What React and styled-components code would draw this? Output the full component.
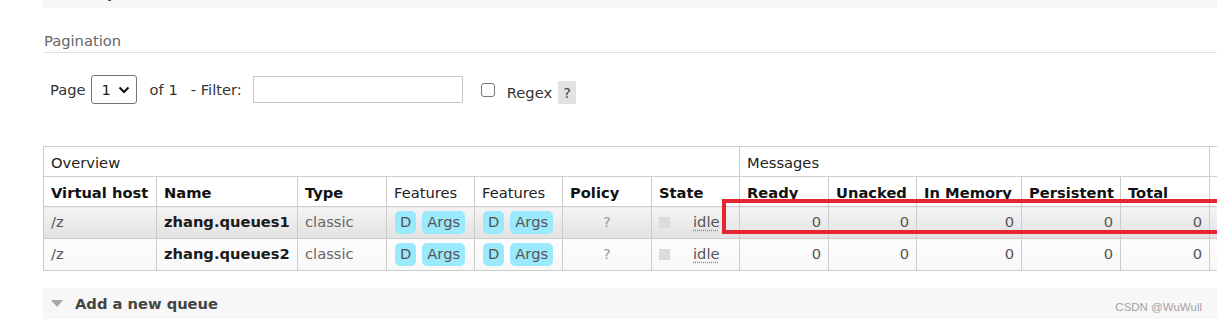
import React from "react";
import styled, { createGlobalStyle } from "styled-components";

const Global = createGlobalStyle`
  html, body { margin: 0; padding: 0; background: #fff; overflow: hidden; }
  body {
    font-family: "DejaVu Sans", Verdana, sans-serif;
    font-size: 14.7px;
    color: #444;
  }
  * { box-sizing: border-box; }
`;

const Page = styled.div`
  position: relative;
  padding-left: 43px;
  height: 321px;
  overflow: hidden;
`;

const SectionBar = styled.div`
  position: relative;
  display: flex;
  align-items: center;
  height: 31px;
  margin-top: ${(p) => p.$offset || 0}px;
  padding-left: 8px;
  background: #f7f7f7;
`;

const Toggle = styled.span`
  width: 0;
  height: 0;
  border-left: 6px solid transparent;
  border-right: 6px solid transparent;
  border-top: 7px solid #a6a6a6;
  margin-right: 12px;
`;

const SectionTitle = styled.h2`
  margin: 0;
  font-size: 14.7px;
  font-weight: bold;
  line-height: 18px;
  color: #444;
`;

const Watermark = styled.span`
  position: absolute;
  right: 15px;
  top: 13px;
  font-family: "Liberation Sans", Arial, sans-serif;
  font-size: 11.5px;
  color: #a3a3a3;
`;

const Legend = styled.h3`
  margin: 24px 0 0;
  padding: 0 0 2px 1px;
  font-size: 14.7px;
  font-weight: normal;
  line-height: 18px;
  color: #666;
  border-bottom: 1px solid #e0e0e0;
`;

const Controls = styled.div`
  display: flex;
  align-items: center;
  height: 29px;
  margin-top: 22px;
  padding-left: 7px;
  color: #333;
`;

const Label = styled.span`
  margin-left: ${(p) => p.$gap || 0}px;
  margin-top: ${(p) => (p.$low ? 6 : 0)}px;
  white-space: nowrap;
`;

const SelectWrap = styled.div`
  position: relative;
  margin-left: 5px;
  width: 46px;
  height: 29px;
`;

const Select = styled.select`
  appearance: none;
  width: 100%;
  height: 100%;
  padding: 0 0 0 10px;
  border: 1px solid #767676;
  border-radius: 3px;
  background: #fff;
  font-family: inherit;
  font-size: 14.7px;
  color: #222;
`;

const Chevron = styled.svg`
  position: absolute;
  right: 7px;
  top: 11px;
  pointer-events: none;
`;

const FilterInput = styled.input`
  margin-left: 11px;
  width: 210px;
  height: 27px;
  border: 1px solid #c6c6c6;
  border-radius: 1px;
  background: #fff;
`;

const Check = styled.input`
  appearance: none;
  margin: 0 0 0 18px;
  width: 14px;
  height: 14px;
  border: 1px solid #767676;
  border-radius: 3px;
  background: #fff;
`;

const Help = styled.span`
  display: inline-flex;
  align-items: center;
  justify-content: center;
  margin: 6px 0 0 6px;
  width: 18px;
  height: 23px;
  background: #e2e2e2;
  color: #444;
`;

const TableClip = styled.div`
  margin-top: 42px;
  overflow: hidden;
`;

const Table = styled.table`
  border-collapse: collapse;
  table-layout: fixed;
  width: 1266px;
`;

const HeadRow = styled.tr`
  height: 30px;
`;

const Th = styled.th`
  border: 1px solid #cccccc;
  padding: 0 6px 4px 7px;
  text-align: left;
  vertical-align: bottom;
  line-height: 18px;
  white-space: nowrap;
  overflow: hidden;
  font-weight: ${(p) => (p.$plain ? "normal" : "bold")};
  color: ${(p) => (p.$plain ? "#222" : "#111")};
  background: #fff;
`;

const DataRow = styled.tr`
  height: 32px;
  & > td {
    background: ${(p) =>
      p.$shade
        ? "linear-gradient(#f4f4f4, #e2e2e2)"
        : "linear-gradient(#fdfdfd, #f7f7f7)"};
  }
`;

const Td = styled.td`
  border: 1px solid #cccccc;
  padding: 0 7px 1px 7px;
  line-height: 18px;
  vertical-align: middle;
  white-space: nowrap;
  overflow: hidden;
  text-align: ${(p) => p.$align || "left"};
  font-weight: ${(p) => (p.$bold ? "bold" : "normal")};
  color: ${(p) => p.$color || "#555"};
`;

const Badge = styled.abbr`
  display: inline-flex;
  align-items: center;
  height: 23px;
  padding: 0 5px;
  margin: 0 5px 0 1px;
  border-radius: 5px;
  background: #9be9fd;
  color: #555;
  text-decoration: none;
  vertical-align: middle;
`;

const StatusKey = styled.span`
  display: inline-block;
  width: 11px;
  height: 11px;
  margin-right: 23px;
  background: #dcdcdc;
  vertical-align: -1px;
`;

const StateText = styled.abbr`
  color: #555;
  text-decoration: underline dotted #888;
  text-underline-offset: 3px;
`;

const Highlight = styled.div`
  position: absolute;
  left: 722px;
  top: 199px;
  width: 520px;
  height: 35px;
  border: 4px solid #e52530;
  pointer-events: none;
`;

const widths = [113, 141, 89, 88, 88, 89, 88, 89, 88, 105, 99, 89, 100];

const queues = [
  { vhost: "/z", name: "zhang.queues1" },
  { vhost: "/z", name: "zhang.queues2" },
];

function Features() {
  return (
    <>
      <Badge title="durable">D</Badge>
      <Badge title="arguments">Args</Badge>
    </>
  );
}

export default function App() {
  return (
    <>
      <Global />
      <Page>
        <SectionBar $offset={-23}>
          <Toggle />
          <SectionTitle>All queues (2)</SectionTitle>
        </SectionBar>

        <Legend>Pagination</Legend>
        <Controls>
          <Label>Page</Label>
          <SelectWrap>
            <Select defaultValue="1">
              <option value="1">1</option>
            </Select>
            <Chevron width="12" height="8" viewBox="0 0 12 8">
              <path d="M1.5 1.5 L6 6 L10.5 1.5" fill="none" stroke="#111" strokeWidth="2" />
            </Chevron>
          </SelectWrap>
          <Label $gap={13}>of 1</Label>
          <Label $gap={13}>- Filter:</Label>
          <FilterInput type="text" />
          <Check type="checkbox" />
          <Label $gap={12} $low>Regex</Label>
          <Help>?</Help>
        </Controls>

        <TableClip>
          <Table>
            <colgroup>
              {widths.map((w, i) => (
                <col key={i} style={{ width: w }} />
              ))}
            </colgroup>
            <thead>
              <HeadRow>
                <Th $plain colSpan={7}>Overview</Th>
                <Th $plain colSpan={5}>Messages</Th>
                <Th $plain></Th>
              </HeadRow>
              <HeadRow>
                <Th>Virtual host</Th>
                <Th>Name</Th>
                <Th>Type</Th>
                <Th $plain>Features</Th>
                <Th $plain>Features</Th>
                <Th>Policy</Th>
                <Th>State</Th>
                <Th>Ready</Th>
                <Th>Unacked</Th>
                <Th>In Memory</Th>
                <Th>Persistent</Th>
                <Th>Total</Th>
                <Th></Th>
              </HeadRow>
            </thead>
            <tbody>
              {queues.map((q, i) => (
                <DataRow key={q.name} $shade={i === 0}>
                  <Td>{q.vhost}</Td>
                  <Td $bold $color="#1a1a1a">{q.name}</Td>
                  <Td $color="#666">classic</Td>
                  <Td><Features /></Td>
                  <Td><Features /></Td>
                  <Td $align="center" $color="#999">?</Td>
                  <Td>
                    <StatusKey />
                    <StateText title="idle">idle</StateText>
                  </Td>
                  <Td $align="right">0</Td>
                  <Td $align="right">0</Td>
                  <Td $align="right">0</Td>
                  <Td $align="right">0</Td>
                  <Td $align="right">0</Td>
                  <Td></Td>
                </DataRow>
              ))}
            </tbody>
          </Table>
        </TableClip>

        <SectionBar $offset={17}>
          <Toggle />
          <SectionTitle>Add a new queue</SectionTitle>
          <Watermark>CSDN @WuWull</Watermark>
        </SectionBar>

        <Highlight />
      </Page>
    </>
  );
}
